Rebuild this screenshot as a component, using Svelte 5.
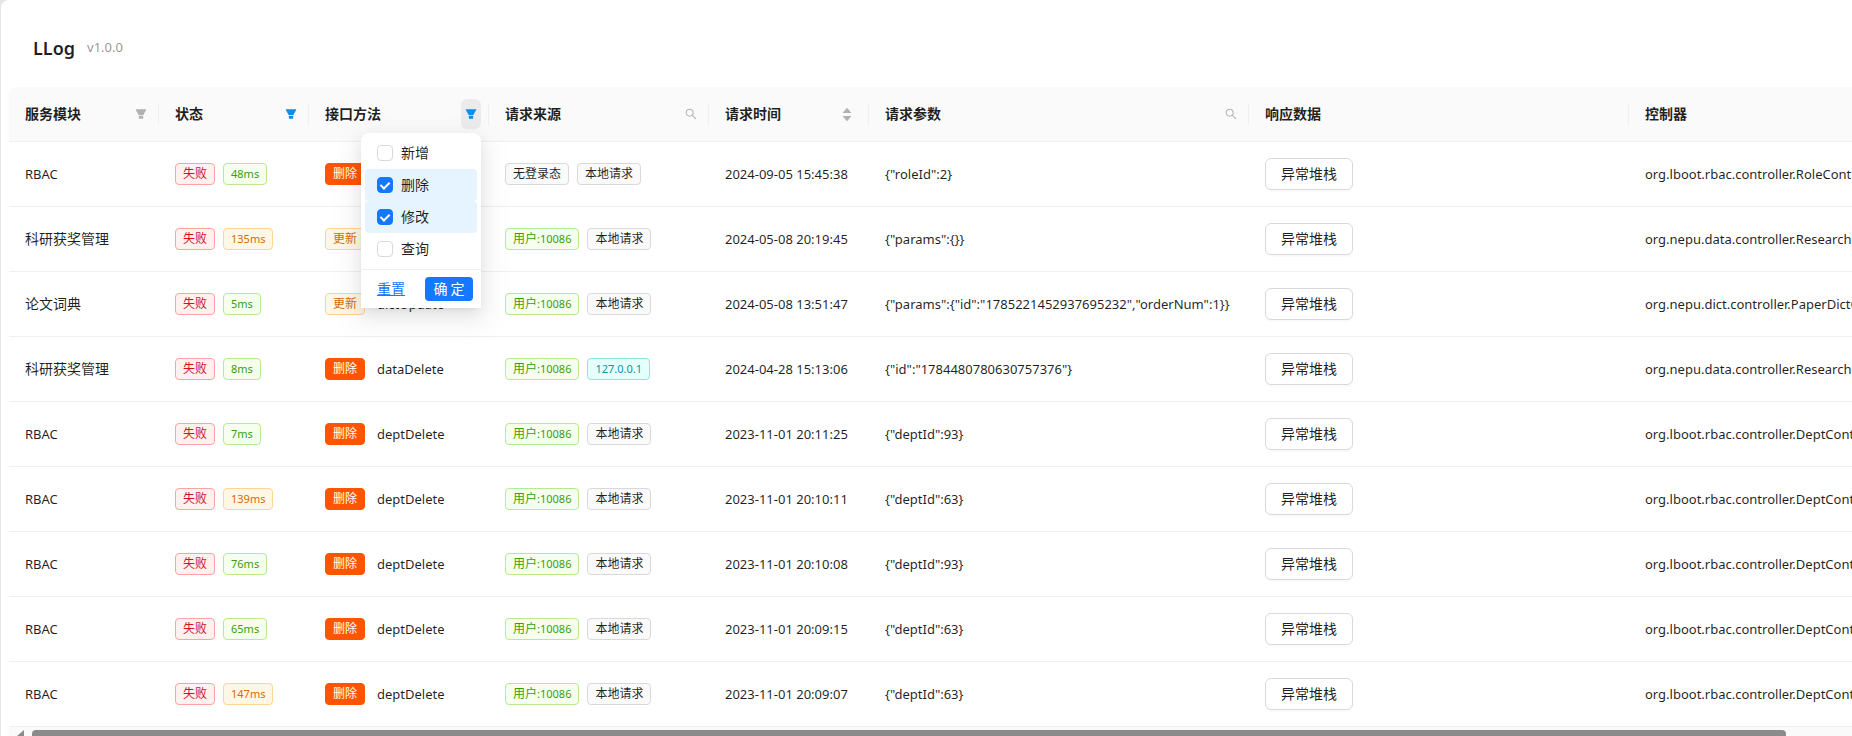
<script>
  const columns = [
    { title: "服务模块", width: 150, icon: "filter" },
    { title: "状态", width: 150, icon: "filter", active: true },
    { title: "接口方法", width: 180, icon: "filter", active: true, menu: true },
    { title: "请求来源", width: 220, icon: "search" },
    { title: "请求时间", width: 160, icon: "sort" },
    { title: "请求参数", width: 380, icon: "search" },
    { title: "响应数据", width: 380 },
    { title: "控制器", width: 340 },
  ];

  const rows = [
    { module: "RBAC", cost: 48, type: "删除", name: "", user: "", ip: "", time: "2024-09-05 15:45:38", params: '{"roleId":2}', controller: "org.lboot.rbac.controller.RoleController" },
    { module: "科研获奖管理", cost: 135, type: "更新", name: "", user: "10086", ip: "", time: "2024-05-08 20:19:45", params: '{"params":{}}', controller: "org.nepu.data.controller.ResearchController" },
    { module: "论文词典", cost: 5, type: "更新", name: "dictUpdate", user: "10086", ip: "", time: "2024-05-08 13:51:47", params: '{"params":{"id":"1785221452937695232","orderNum":1}}', controller: "org.nepu.dict.controller.PaperDictController" },
    { module: "科研获奖管理", cost: 8, type: "删除", name: "dataDelete", user: "10086", ip: "127.0.0.1", time: "2024-04-28 15:13:06", params: '{"id":"1784480780630757376"}', controller: "org.nepu.data.controller.ResearchController" },
    { module: "RBAC", cost: 7, type: "删除", name: "deptDelete", user: "10086", ip: "", time: "2023-11-01 20:11:25", params: '{"deptId":93}', controller: "org.lboot.rbac.controller.DeptController" },
    { module: "RBAC", cost: 139, type: "删除", name: "deptDelete", user: "10086", ip: "", time: "2023-11-01 20:10:11", params: '{"deptId":63}', controller: "org.lboot.rbac.controller.DeptController" },
    { module: "RBAC", cost: 76, type: "删除", name: "deptDelete", user: "10086", ip: "", time: "2023-11-01 20:10:08", params: '{"deptId":93}', controller: "org.lboot.rbac.controller.DeptController" },
    { module: "RBAC", cost: 65, type: "删除", name: "deptDelete", user: "10086", ip: "", time: "2023-11-01 20:09:15", params: '{"deptId":63}', controller: "org.lboot.rbac.controller.DeptController" },
    { module: "RBAC", cost: 147, type: "删除", name: "deptDelete", user: "10086", ip: "", time: "2023-11-01 20:09:07", params: '{"deptId":63}', controller: "org.lboot.rbac.controller.DeptController" },
  ];

  let methods = [
    { label: "新增", checked: false },
    { label: "删除", checked: true },
    { label: "修改", checked: true },
    { label: "查询", checked: false },
  ];
  let open = true;

  function reset() {
    methods = methods.map((m) => ({ ...m, checked: false }));
  }
</script>

<main class="page">
  <header>
    <h1>LLog</h1>
    <span class="version">v1.0.0</span>
  </header>

  <div class="table-wrap">
    <table>
      <colgroup>
        {#each columns as col}
          <col style="width: {col.width}px" />
        {/each}
      </colgroup>
      <thead>
        <tr>
          {#each columns as col}
            <th scope="col">
              <div class="head">
                <span class="title">{col.title}</span>
                {#if col.icon === "filter"}
                  <button
                    class="icon-btn"
                    class:active={col.active}
                    class:open={col.menu && open}
                    aria-label="{col.title}筛选"
                    on:click={() => col.menu && (open = !open)}
                  >
                    <svg viewBox="64 64 896 896" width="12" height="12">
                      <path d="M349 838c0 17.7 14.2 32 31.8 32h262.4c17.6 0 31.8-14.3 31.8-32V642H349v196zm531.1-684H143.9c-24.5 0-39.8 26.7-27.5 48l221.3 376h348.8l221.3-376c12.1-21.3-3.2-48-27.7-48z" />
                    </svg>
                  </button>
                {:else if col.icon === "search"}
                  <button class="icon-btn" aria-label="{col.title}搜索">
                    <svg viewBox="64 64 896 896" width="12" height="12">
                      <path d="M909.6 854.5L649.9 594.8C690.2 542.7 712 479 712 412c0-80.2-31.3-155.4-87.9-212.1-56.6-56.7-132-87.9-212.1-87.9s-155.5 31.3-212.1 87.9C143.2 256.5 112 331.8 112 412c0 80.1 31.3 155.5 87.9 212.1C256.5 680.8 331.8 712 412 712c67 0 130.6-21.8 182.7-62l259.7 259.6a8.2 8.2 0 0011.6 0l43.6-43.5a8.2 8.2 0 000-11.6zM570.4 570.4C528 612.7 471.8 636 412 636s-116-23.3-158.4-65.6C211.3 528 188 471.8 188 412s23.3-116.1 65.6-158.4C296 211.3 352.2 188 412 188s116.1 23.2 158.4 65.6S636 352.2 636 412s-23.3 116.1-65.6 158.4z" />
                    </svg>
                  </button>
                {:else if col.icon === "sort"}
                  <button class="sorter" aria-label="{col.title}排序">
                    <svg viewBox="0 300 1024 424" width="12" height="5">
                      <path d="M858.9 689L530.5 308.2c-9.4-10.9-27.5-10.9-37 0L165.1 689c-12.2 14.2-1.2 35 18.5 35h656.8c19.7 0 30.7-20.8 18.5-35z" />
                    </svg>
                    <svg viewBox="0 300 1024 424" width="12" height="5">
                      <path d="M840.4 300H183.6c-19.7 0-30.7 20.8-18.5 35l328.4 380.8c9.4 10.9 27.5 10.9 37 0L858.9 335c12.2-14.2 1.2-35-18.5-35z" />
                    </svg>
                  </button>
                {/if}
              </div>

              {#if col.menu && open}
                <div class="dropdown">
                  <div class="options">
                    {#each methods as method}
                      <label class:selected={method.checked}>
                        <input type="checkbox" bind:checked={method.checked} />
                        <span class="title">{method.label}</span>
                      </label>
                    {/each}
                  </div>
                  <div class="actions">
                    <button class="reset" on:click={reset}>重置</button>
                    <button class="confirm" on:click={() => (open = false)}>确 定</button>
                  </div>
                </div>
              {/if}
            </th>
          {/each}
        </tr>
      </thead>
      <tbody>
        {#each rows as row}
          <tr>
            <td class:latin={row.module === "RBAC"}>{row.module}</td>
            <td>
              <div class="tags">
                <span class="tag red">失败</span>
                <span class="tag latin {row.cost > 100 ? 'orange' : 'green'}">{row.cost}ms</span>
              </div>
            </td>
            <td>
              <div class="method">
                <span class="tag {row.type === '删除' ? 'solid' : 'orange'}">{row.type}</span>
                {#if row.name}<span class="latin">{row.name}</span>{/if}
              </div>
            </td>
            <td>
              <div class="tags">
                {#if row.user}
                  <span class="tag green">用户<span class="latin">:{row.user}</span></span>
                {:else}
                  <span class="tag">无登录态</span>
                {/if}
                {#if row.ip}
                  <span class="tag latin cyan">{row.ip}</span>
                {:else}
                  <span class="tag">本地请求</span>
                {/if}
              </div>
            </td>
            <td class="latin">{row.time}</td>
            <td class="latin">{row.params}</td>
            <td><button class="stack">异常堆栈</button></td>
            <td class="latin">{row.controller}</td>
          </tr>
        {/each}
      </tbody>
    </table>
  </div>

  <div class="scrollbar">
    <svg viewBox="0 0 7 12" width="7" height="12"><path d="M7 0v12L0 6z" /></svg>
    <div class="thumb"></div>
  </div>
</main>

<style>
  :global(body) {
    background: #e6e6e6;
    overflow: hidden;
  }

  .page {
    --text: rgba(0, 0, 0, 0.88);
    --line: #f0f0f0;
    --primary: #1677ff;
    box-sizing: border-box;
    height: 100vh;
    margin-left: 1px;
    padding-left: 8px;
    overflow: hidden;
    background: #fff;
    border-top-left-radius: 8px;
    color: var(--text);
    font-family: "Noto Sans", "Noto Sans CJK SC", sans-serif;
    font-size: 14px;
    line-height: 22px;
  }

  button {
    font: inherit;
    color: inherit;
    border: none;
    background: none;
    padding: 0;
    cursor: pointer;
  }

  .latin {
    font-size: 13px;
  }

  header {
    display: flex;
    align-items: center;
    gap: 12px;
    padding: 32px 24px 23px;
  }

  h1 {
    margin: 0;
    font-size: 18px;
    line-height: 32px;
    font-weight: 600;
  }

  .version {
    font-size: 13px;
    line-height: 30px;
    padding-bottom: 2px;
    color: rgba(0, 0, 0, 0.45);
  }

  .table-wrap {
    overflow: hidden;
    border-top-left-radius: 8px;
  }

  table {
    width: 1960px;
    min-width: 100%;
    table-layout: fixed;
    border-collapse: separate;
    border-spacing: 0;
  }

  th,
  td {
    padding: 16px;
    text-align: left;
    white-space: nowrap;
    border-bottom: 1px solid var(--line);
  }

  td {
    height: 32px;
  }

  th {
    position: relative;
    background: #fafafa;
    font-family: "Noto Sans CJK SC", sans-serif;
    font-weight: 600;
  }

  th:not(:last-child)::after {
    content: "";
    position: absolute;
    top: 16px;
    right: 0;
    width: 1px;
    height: 22px;
    background: var(--line);
  }

  .head {
    display: flex;
    align-items: center;
    justify-content: space-between;
    height: 22px;
  }

  .title {
    line-height: 20px;
    padding-bottom: 2px;
  }

  .icon-btn {
    display: flex;
    align-items: center;
    justify-content: center;
    width: 20px;
    height: 30px;
    margin-right: -8px;
    border-radius: 6px;
    color: rgba(0, 0, 0, 0.29);
  }

  .icon-btn.active {
    color: #108ee9;
  }

  .icon-btn.open {
    background: rgba(0, 0, 0, 0.06);
  }

  svg {
    display: block;
    fill: currentColor;
  }

  .sorter {
    display: flex;
    flex-direction: column;
    gap: 3px;
    color: rgba(0, 0, 0, 0.29);
  }

  .dropdown {
    position: absolute;
    top: 46px;
    right: 8px;
    z-index: 10;
    width: 120px;
    background: #fff;
    border-radius: 8px 8px 0 0;
    box-shadow:
      0 6px 16px 0 rgba(0, 0, 0, 0.08),
      0 3px 6px -4px rgba(0, 0, 0, 0.12),
      0 9px 28px 8px rgba(0, 0, 0, 0.05);
    font-weight: 400;
  }

  .options {
    padding: 4px;
  }

  label {
    display: flex;
    align-items: center;
    gap: 8px;
    height: 32px;
    padding: 0 12px;
    border-radius: 4px;
    cursor: pointer;
  }

  label.selected {
    background: #e6f4ff;
  }

  input {
    appearance: none;
    box-sizing: border-box;
    width: 16px;
    height: 16px;
    margin: 0;
    border: 1px solid #d9d9d9;
    border-radius: 4px;
    background: #fff;
  }

  input:checked {
    display: grid;
    place-items: center;
    border-color: var(--primary);
    background: var(--primary);
  }

  input:checked::after {
    content: "";
    width: 4px;
    height: 7px;
    margin-bottom: 2px;
    border: solid #fff;
    border-width: 0 2px 2px 0;
    transform: rotate(45deg);
  }

  .actions {
    display: flex;
    align-items: center;
    justify-content: space-between;
    padding: 7px 8px 7px 16px;
    border-top: 1px solid var(--line);
  }

  .actions button {
    height: 24px;
    padding-bottom: 2px;
  }

  .reset {
    color: var(--primary);
    text-decoration: underline;
  }

  .confirm {
    width: 48px;
    border-radius: 4px;
    background: var(--primary);
    color: #fff;
  }

  .tags,
  .method {
    display: flex;
    align-items: center;
    gap: 8px;
  }

  .method {
    gap: 12px;
  }

  .tag {
    padding: 0 7px;
    border: 1px solid #d9d9d9;
    border-radius: 4px;
    background: #fafafa;
    font-size: 12px;
    line-height: 20px;
  }

  .tag.latin,
  .tag .latin {
    font-size: 11px;
  }

  .red {
    color: #cf1322;
    background: #fff1f0;
    border-color: #ffa39e;
  }

  .green {
    color: #389e0d;
    background: #f6ffed;
    border-color: #b7eb8f;
  }

  .orange {
    color: #d46b08;
    background: #fff7e6;
    border-color: #ffd591;
  }

  .cyan {
    color: #08979c;
    background: #e6fffb;
    border-color: #87e8de;
  }

  .solid {
    color: #fff;
    background: #ff5500;
    border-color: #ff5500;
  }

  .stack {
    display: block;
    height: 32px;
    padding: 0 15px;
    border: 1px solid #d9d9d9;
    border-radius: 6px;
    background: #fff;
    box-shadow: 0 2px 0 rgba(0, 0, 0, 0.02);
  }

  .scrollbar {
    display: flex;
    gap: 8px;
    padding: 3px 66px 3px 8px;
    background: #fafafa;
    color: #8b8b8b;
  }

  .thumb {
    flex: 1;
    height: 12px;
    border-radius: 4px;
    background: #8b8b8b;
  }
</style>
